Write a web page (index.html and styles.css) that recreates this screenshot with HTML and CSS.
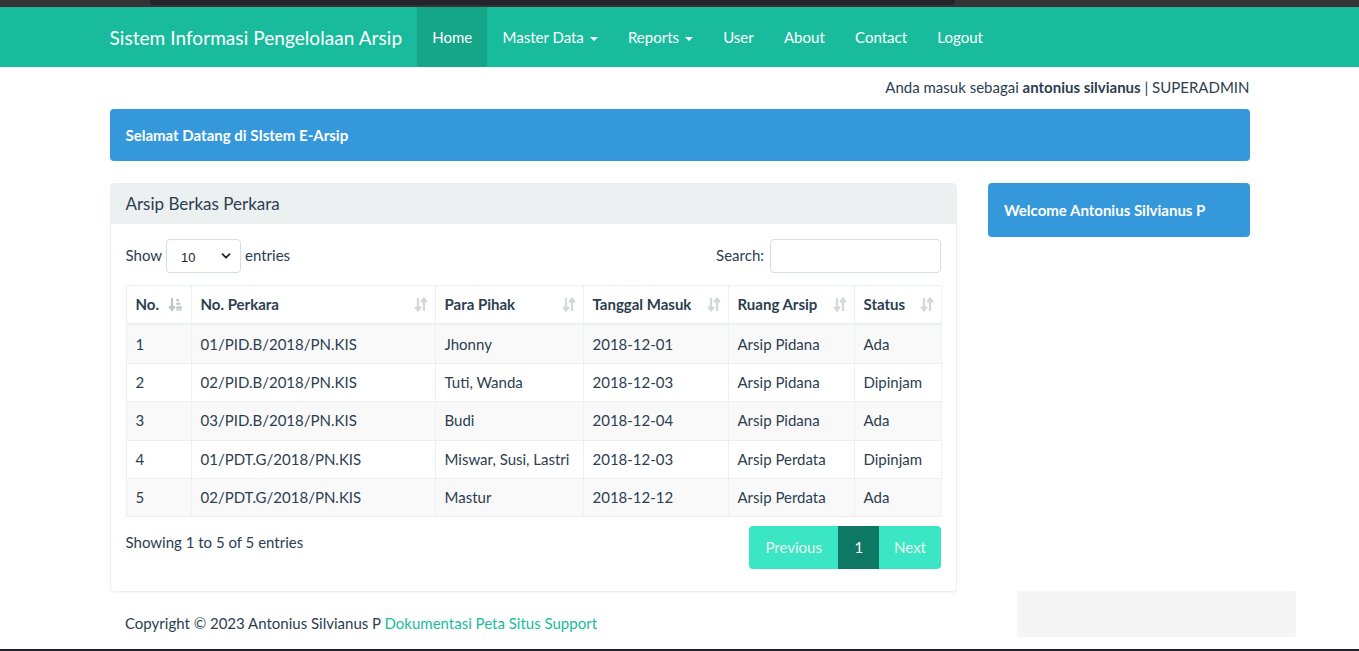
FILE: index.html
```html
<!DOCTYPE html>
<html lang="id">
<head>
<meta charset="utf-8">
<title>Sistem Informasi Pengelolaan Arsip</title>
<link rel="stylesheet" href="styles.css">
</head>
<body>
<div class="topbar"><div class="topbar-tab"></div></div>
<nav class="navbar">
  <div class="container nav-inner">
    <a class="brand" href="#">Sistem Informasi Pengelolaan Arsip</a>
    <ul class="nav">
      <li class="active"><a href="#">Home</a></li>
      <li><a href="#">Master Data <span class="caret"></span></a></li>
      <li><a href="#">Reports <span class="caret"></span></a></li>
      <li><a href="#">User</a></li>
      <li><a href="#">About</a></li>
      <li><a href="#">Contact</a></li>
      <li><a href="#">Logout</a></li>
    </ul>
  </div>
</nav>

<main class="container">
  <p class="login-info">Anda masuk sebagai <b>antonius silvianus</b> | SUPERADMIN</p>
  <div class="alert"><b>Selamat Datang di SIstem E-Arsip</b></div>

  <div class="row">
    <div class="col-main">
      <div class="panel">
        <div class="panel-heading">Arsip Berkas Perkara</div>
        <div class="panel-body">
          <div class="dt-top">
            <label class="dt-length">Show
              <span class="select-wrap">
                <select class="select"><option>10</option><option>25</option><option>50</option><option>100</option></select>
                <svg class="chev" viewBox="0 0 10 10" width="10" height="10"><path d="M1.5 3.2 5 6.7 8.5 3.2" fill="none" stroke="#222" stroke-width="1.8" stroke-linecap="round" stroke-linejoin="round"/></svg>
              </span>
              entries</label>
            <label class="dt-search">Search: <input class="input" type="search"></label>
          </div>
          <table class="table">
            <colgroup>
              <col style="width:65px"><col style="width:244px"><col style="width:148px"><col style="width:145px"><col style="width:126px"><col style="width:87px">
            </colgroup>
            <thead>
              <tr>
                <th>No.<svg class="sort asc" viewBox="0 0 14 15" width="14" height="15"><path d="M4 1v11.5M1.2 9.2 4 12.8l2.8-3.6" fill="none" stroke="currentColor" stroke-width="2.2"/><rect x="8.3" y="2" width="2.6" height="2.2" fill="currentColor"/><rect x="8.3" y="5.7" width="4" height="2.2" fill="currentColor"/><rect x="8.3" y="9.4" width="5.4" height="2.4" fill="currentColor"/><rect x="8.3" y="12.4" width="5.4" height="1.2" fill="currentColor"/></svg></th>
                <th>No. Perkara<svg class="sort" viewBox="0 0 14 15" width="14" height="15"><path d="M4 1v12M1.2 9.8 4 13.4l2.8-3.6M10 14V2M7.2 5.2 10 1.6l2.8 3.6" fill="none" stroke="currentColor" stroke-width="2.2"/></svg></th>
                <th>Para Pihak<svg class="sort" viewBox="0 0 14 15" width="14" height="15"><path d="M4 1v12M1.2 9.8 4 13.4l2.8-3.6M10 14V2M7.2 5.2 10 1.6l2.8 3.6" fill="none" stroke="currentColor" stroke-width="2.2"/></svg></th>
                <th>Tanggal Masuk<svg class="sort" viewBox="0 0 14 15" width="14" height="15"><path d="M4 1v12M1.2 9.8 4 13.4l2.8-3.6M10 14V2M7.2 5.2 10 1.6l2.8 3.6" fill="none" stroke="currentColor" stroke-width="2.2"/></svg></th>
                <th>Ruang Arsip<svg class="sort" viewBox="0 0 14 15" width="14" height="15"><path d="M4 1v12M1.2 9.8 4 13.4l2.8-3.6M10 14V2M7.2 5.2 10 1.6l2.8 3.6" fill="none" stroke="currentColor" stroke-width="2.2"/></svg></th>
                <th>Status<svg class="sort" viewBox="0 0 14 15" width="14" height="15"><path d="M4 1v12M1.2 9.8 4 13.4l2.8-3.6M10 14V2M7.2 5.2 10 1.6l2.8 3.6" fill="none" stroke="currentColor" stroke-width="2.2"/></svg></th>
              </tr>
            </thead>
            <tbody>
              <tr><td>1</td><td>01/PID.B/2018/PN.KIS</td><td>Jhonny</td><td>2018-12-01</td><td>Arsip Pidana</td><td>Ada</td></tr>
              <tr><td>2</td><td>02/PID.B/2018/PN.KIS</td><td>Tuti, Wanda</td><td>2018-12-03</td><td>Arsip Pidana</td><td>Dipinjam</td></tr>
              <tr><td>3</td><td>03/PID.B/2018/PN.KIS</td><td>Budi</td><td>2018-12-04</td><td>Arsip Pidana</td><td>Ada</td></tr>
              <tr><td>4</td><td>01/PDT.G/2018/PN.KIS</td><td>Miswar, Susi, Lastri</td><td>2018-12-03</td><td>Arsip Perdata</td><td>Dipinjam</td></tr>
              <tr><td>5</td><td>02/PDT.G/2018/PN.KIS</td><td>Mastur</td><td>2018-12-12</td><td>Arsip Perdata</td><td>Ada</td></tr>
            </tbody>
          </table>
          <div class="dt-bottom">
            <div class="dt-info">Showing 1 to 5 of 5 entries</div>
            <ul class="pagination">
              <li class="disabled prev"><a href="#">Previous</a></li>
              <li class="current"><a href="#">1</a></li>
              <li class="disabled next"><a href="#">Next</a></li>
            </ul>
          </div>
        </div>
      </div>
    </div>
    <div class="col-side">
      <div class="alert side"><b>Welcome Antonius Silvianus P</b></div>
    </div>
  </div>

  <footer class="footer">Copyright © 2023 Antonius Silvianus P <a href="#">Dokumentasi Peta Situs Support</a></footer>
</main>
<div class="toast"></div>
<div class="bottombar"></div>
</body>
</html>
```

FILE: styles.css
```css
* { box-sizing: border-box; }
html, body { margin: 0; padding: 0; }
body {
  font-family: Lato, "Helvetica Neue", "Liberation Sans", Arial, sans-serif;
  font-size: 15px;
  line-height: 1.42857;
  color: #2c3e50;
  background: #fff;
  height: 651px;
  overflow: hidden;
  position: relative;
}
a { text-decoration: none; }

.topbar { height: 7px; background: #333338; padding: 0 0 0 150px; }
.topbar-tab { width: 805px; height: 5px; background: #24232c; border-radius: 0 0 4px 4px; }

.container { width: 1170px; margin: 0 auto; padding: 0 15px; }

.navbar { background: #18bc9c; height: 60px; }
.nav-inner { display: flex; height: 60px; }
.brand {
  color: #fff;
  font-size: 19px;
  line-height: 21px;
  padding: 19.5px 15px 19.5px 0;
  letter-spacing: 0.06px;
  height: 60px;
}
.nav { display: flex; list-style: none; margin: 0; padding: 0; }
.nav li a {
  display: block;
  color: #fff;
  padding: 19.5px 15.15px;
  line-height: 21px;
  height: 60px;
}
.nav li.active a { background: #15a589; }
.caret {
  display: inline-block;
  width: 0; height: 0;
  margin-left: 2px;
  vertical-align: middle;
  border-top: 4px solid #fff;
  border-left: 4px solid transparent;
  border-right: 4px solid transparent;
}

.login-info { text-align: right; margin: 10px 0 11px; line-height: 21px; }
.alert {
  background: #3498db;
  color: #fff;
  border-radius: 4px;
  padding: 15.5px 16px;
  margin-bottom: 22px;
  line-height: 21px;
}

.row { display: flex; gap: 30px; }
.col-main { width: 847.5px; }
.col-side { width: 262.5px; padding-left: 1px; }
.alert.side { padding: 16.5px 16px; }

.panel {
  border: 1px solid #ecf0f1;
  border-radius: 4px;
  box-shadow: 0 1px 1px rgba(0,0,0,0.05);
  margin-bottom: 21px;
}
.panel-heading {
  background: #ecf0f1;
  padding: 9px 15px 10px;
  font-size: 17px;
  line-height: 21px;
  border-radius: 3px 3px 0 0;
}
.panel-body { padding: 15px 15px 22px; }

.dt-top { display: flex; justify-content: space-between; align-items: center; height: 34px; margin-bottom: 12px; }
.dt-length, .dt-search { display: flex; align-items: center; gap: 4px; font-weight: normal; }
.select-wrap { position: relative; display: inline-block; }
.select {
  appearance: none;
  -webkit-appearance: none;
  width: 75px; height: 34px;
  border: 1px solid #d7dde3;
  border-radius: 4px;
  background: #fff;
  font-family: "Liberation Sans", Arial, sans-serif;
  font-size: 13px;
  color: #222;
  padding: 3px 14px 0;
}
.chev { position: absolute; right: 10px; top: 12px; pointer-events: none; }
.input {
  width: 171px; height: 34px;
  border: 1px solid #d7dde3;
  border-radius: 4px;
  margin-left: 2px;
}

.table { width: 100%; border-collapse: collapse; border: 1px solid #ecf0f1; table-layout: fixed; }
.table th, .table td {
  border: 1px solid #ecf0f1;
  padding: 8.2px 9px;
  line-height: 21px;
  text-align: left;
  white-space: nowrap;
}
.table th { font-weight: bold; position: relative; padding-right: 24px; border-bottom-width: 2px; }
.table tbody tr:nth-child(odd) { background: #f9f9f9; }
.sort { position: absolute; right: 7px; top: 11px; color: #2c3e50; opacity: 0.2; }
.sort.asc { opacity: 0.3; right: 9px; }

.dt-bottom { display: flex; justify-content: space-between; align-items: flex-start; margin-top: 9px; }
.dt-info { padding-top: 6px; }
.pagination { display: flex; list-style: none; margin: 0; padding: 0; }
.pagination a {
  display: block;
  padding: 10px 15px 10px;
  line-height: 21px;
  color: #ecf0f1;
  background: #3be6c4;
  border: 1px solid transparent;
}
.pagination .prev a { padding: 10px 15.5px; border-radius: 4px 0 0 4px; }
.pagination .next a { padding: 10px 14px; border-radius: 0 4px 4px 0; }
.pagination .current a { background: #0f7864; color: #fff; padding: 10px 15px; }

.footer { padding: 0 15px 0 15px; margin-left: 0.5px; }
.footer a { color: #18bc9c; }

.toast {
  position: absolute;
  left: 1017px; top: 591px;
  width: 279px; height: 46px;
  background: #f5f5f5;
  border-radius: 3px;
}
.bottombar { position: absolute; left: 0; right: 0; bottom: 0; height: 2px; background: #1f1e28; }
```
